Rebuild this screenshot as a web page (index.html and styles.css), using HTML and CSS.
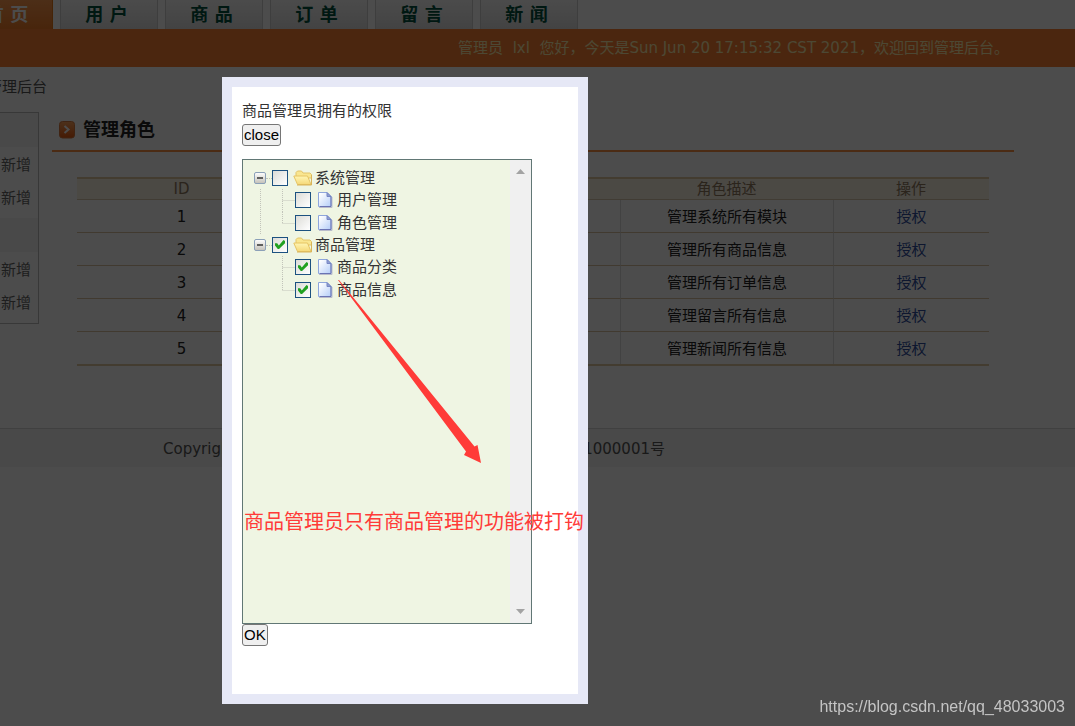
FILE: index.html
```html
<!DOCTYPE html>
<html lang="zh-CN">
<head>
<meta charset="utf-8">
<title>管理后台</title>
<link rel="stylesheet" href="styles.css">
</head>
<body>
<svg class="defs" aria-hidden="true">
  <defs>
    <linearGradient id="gFolder" x1="0" y1="0" x2="0" y2="1"><stop offset="0" stop-color="#fff6b4"/><stop offset="1" stop-color="#f5d878"/></linearGradient>
    <linearGradient id="gFile" x1="0" y1="0" x2="1" y2="1"><stop offset="0.1" stop-color="#ffffff"/><stop offset="1" stop-color="#b4cdf8"/></linearGradient>
    <linearGradient id="gToggle" x1="0" y1="0" x2="0" y2="1"><stop offset="0" stop-color="#ffffff"/><stop offset="1" stop-color="#c3c0b8"/></linearGradient>
    <linearGradient id="gTitle" x1="0" y1="0" x2="0" y2="1"><stop offset="0" stop-color="#ffa45c"/><stop offset="1" stop-color="#e85a10"/></linearGradient>
    <symbol id="folder" viewBox="0 0 20 16">
      <path d="M3 8V2.500L4.500 1H8.500L10 3H17L18.500 4.500V8z" fill="#f9e690" stroke="#e3c468"/>
      <path d="M.8 6H14.500L18 14.500H4.500z" fill="url(#gFolder)" stroke="#e6c463"/>
      <path d="M4 15H18.500V5" fill="none" stroke="#d9b55a"/>
    </symbol>
    <symbol id="file" viewBox="0 0 16 18">
      <path d="M2 16.500H15V6" fill="none" stroke="#b9bccb"/>
      <path d="M1.500 1.500H10L14 5.500V15.500H1.500z" fill="url(#gFile)" stroke="#8ea6dc"/>
      <path d="M10 1.500V5.500H14z" fill="#8f9fd2" stroke="#7686c4"/>
      <path d="M14 5.500V15.500H3" fill="none" stroke="#6a74b4"/>
    </symbol>
    <symbol id="minus" viewBox="0 0 12 12">
      <rect x=".5" y=".5" width="11" height="11" rx="1.500" fill="url(#gToggle)" stroke="#8ba0b8"/>
      <path d="M3 6H9" stroke="#333" stroke-width="1.500"/>
    </symbol>
    <symbol id="branch" viewBox="0 0 13 23">
      <path d="M.5 0V23M.5 11.500H13" fill="none" stroke="#c2c4ba" stroke-dasharray="1 1"/>
    </symbol>
    <symbol id="branchEnd" viewBox="0 0 13 23">
      <path d="M.5 0V11.500M.5 11.500H13" fill="none" stroke="#c2c4ba" stroke-dasharray="1 1"/>
    </symbol>
  </defs>
</svg>

<div class="page">
  <nav class="tabs">
    <a class="tab active" href="#">首 页</a>
    <a class="tab" href="#">用 户</a>
    <a class="tab" href="#">商 品</a>
    <a class="tab" href="#">订 单</a>
    <a class="tab" href="#">留 言</a>
    <a class="tab" href="#">新 闻</a>
  </nav>
  <div class="welcome">管理员&nbsp; lxl&nbsp; 您好，今天是Sun Jun 20 17:15:32 CST 2021，欢迎回到管理后台。</div>
  <div class="crumb">管理后台</div>
  <div class="columns">
    <aside class="side">
      <div class="side-head"></div>
      <a href="#">新增</a>
      <a href="#">新增</a>
      <div class="side-head"></div>
      <a href="#">新增</a>
      <a href="#">新增</a>
    </aside>
    <main class="main">
      <h1 class="title">
        <svg width="16" height="18" viewBox="0 0 16 18"><rect x=".5" y=".5" width="15" height="16.500" rx="3" fill="url(#gTitle)" stroke="#d87a40"/><path d="M5.500 5L9.500 8.500L5.500 12" fill="none" stroke="#fff" stroke-width="2"/></svg>
        管理角色
      </h1>
      <table class="roles">
        <thead>
          <tr><th class="c-id">ID</th><th class="c-name">角色名称</th><th class="c-desc">角色描述</th><th class="c-op">操作</th></tr>
        </thead>
        <tbody>
          <tr><td>1</td><td>系统管理员</td><td>管理系统所有模块</td><td><a href="#">授权</a></td></tr>
          <tr><td>2</td><td>商品管理员</td><td>管理所有商品信息</td><td><a href="#">授权</a></td></tr>
          <tr><td>3</td><td>订单管理员</td><td>管理所有订单信息</td><td><a href="#">授权</a></td></tr>
          <tr><td>4</td><td>留言管理员</td><td>管理留言所有信息</td><td><a href="#">授权</a></td></tr>
          <tr><td>5</td><td>新闻管理员</td><td>管理新闻所有信息</td><td><a href="#">授权</a></td></tr>
        </tbody>
      </table>
    </main>
  </div>
  <footer class="footer"><span>Copyright © 2021 All Rights Reserved.</span><span>京ICP证1000001号</span></footer>
</div>

<div class="overlay">
  <section class="dialog" role="dialog" aria-labelledby="dlg-title">
    <div class="dlg-title" id="dlg-title">商品管理员拥有的权限</div>
    <button class="btn" type="button">close</button>
    <div class="treebox">
      <ul class="tree">
        <li>
          <div class="row">
            <button class="toggle" type="button" aria-label="折叠"><svg width="12" height="12"><use href="#minus"/></svg></button>
            <span class="dots"></span>
            <label><input type="checkbox"><svg class="folder" width="20" height="16"><use href="#folder"/></svg>系统管理</label>
          </div>
          <ul class="children">
            <li class="row"><svg width="13" height="23"><use href="#branch"/></svg><label><input type="checkbox"><svg class="file" width="16" height="18"><use href="#file"/></svg>用户管理</label></li>
            <li class="row"><svg width="13" height="23"><use href="#branchEnd"/></svg><label><input type="checkbox"><svg class="file" width="16" height="18"><use href="#file"/></svg>角色管理</label></li>
          </ul>
        </li>
        <li>
          <div class="row">
            <button class="toggle" type="button" aria-label="折叠"><svg width="12" height="12"><use href="#minus"/></svg></button>
            <span class="dots"></span>
            <label><input type="checkbox" checked><svg class="folder" width="20" height="16"><use href="#folder"/></svg>商品管理</label>
          </div>
          <ul class="children last">
            <li class="row"><svg width="13" height="23"><use href="#branch"/></svg><label><input type="checkbox" checked><svg class="file" width="16" height="18"><use href="#file"/></svg>商品分类</label></li>
            <li class="row"><svg width="13" height="23"><use href="#branchEnd"/></svg><label><input type="checkbox" checked><svg class="file" width="16" height="18"><use href="#file"/></svg>商品信息</label></li>
          </ul>
        </li>
      </ul>
      <div class="scroll" aria-hidden="true">
        <svg width="9" height="5" viewBox="0 0 9 5"><path d="M0 5L4.500 0L9 5z" fill="#a3a3a3"/></svg>
        <svg width="9" height="5" viewBox="0 0 9 5"><path d="M0 0L4.500 5L9 0z" fill="#a3a3a3"/></svg>
      </div>
    </div>
    <button class="btn" type="button">OK</button>
    <svg class="arrow" width="144" height="184" viewBox="0 0 144 184"><path d="M0 0L1 0L136.500 166.500L139.500 165L143 183L126 175L128 171.500L56 75Z" fill="#ff3b38"/></svg>
    <p class="note">商品管理员只有商品管理的功能被打钩</p>
  </section>
  <div class="mark">https://blog.csdn.net/qq_48033003</div>
</div>
</body>
</html>
```
FILE: styles.css
```css
* { box-sizing: border-box; }

body {
  margin: 0;
  overflow: hidden;
  background: #fff;
  color: #222;
  font: 15px/20px "DejaVu Sans", "Noto Sans CJK SC", sans-serif;
}

ul { margin: 0; padding: 0; list-style: none; }
a { text-decoration: none; }
.defs { position: absolute; width: 0; height: 0; }

.tabs {
  display: flex;
  gap: 7px;
  height: 29px;
  margin-left: -45px;
}

.tab {
  width: 98px;
  padding-right: 5px;
  border: solid #d0d0d0;
  border-width: 0 1px;
  background: linear-gradient(#fcfcfc, #e0e0e0);
  color: #00503c;
  font-size: 18px;
  font-weight: bold;
  line-height: 30px;
  text-align: center;
}

.tab.active {
  padding: 0 0 0 6px;
  border-color: #e87818;
  background: linear-gradient(#ff9a50, #f07c28);
  color: #fff;
}

.welcome {
  height: 38px;
  padding-right: 66px;
  background: #fa7f35;
  color: #fff0b0;
  line-height: 38px;
  text-align: right;
}

.crumb {
  padding: 10px 0 15px;
  margin-left: -13px;
  color: #555;
}

.columns {
  display: flex;
  align-items: flex-start;
  gap: 13px;
}

.side {
  width: 39px;
  border: 1px solid #bbb;
  border-left: 0;
  padding-bottom: 3px;
}

.side a {
  display: block;
  padding-left: 1px;
  color: #666;
  line-height: 33px;
}

.side-head { height: 34px; margin-bottom: 2px; background: #f6f6f6; }
.side a + .side-head { margin-top: 3px; }

.main { flex: 1; margin-right: 61px; }

.title {
  display: flex;
  align-items: center;
  gap: 8px;
  margin: 0;
  padding: 0 7px 2px;
  border-bottom: 2px solid #fa8f45;
  color: #222;
  font-size: 18px;
  line-height: 36px;
}

.roles {
  width: calc(100% - 50px);
  margin: 25px 25px 0;
  border: solid #e0c8a0;
  border-width: 2px 0;
  border-spacing: 0;
  table-layout: fixed;
  text-align: center;
}

.roles th {
  height: 21px;
  padding: 0;
  border-bottom: 1px solid #d9c9b0;
  background: #fbf3e4;
  color: #8f7a60;
  font-weight: normal;
}

.roles td {
  height: 33px;
  padding: 2px 0 0;
  border-bottom: 1px solid #d9c3a0;
}

.roles tr:last-child td { height: 32px; border-bottom: 0; }
.roles td:nth-child(n+3) { border-left: 1px solid #dedede; }
.roles a { color: #2f4f9f; }
.c-id { width: 209px; }
.c-desc { width: 213px; }
.c-op { width: 156px; }

.footer {
  display: flex;
  justify-content: space-between;
  height: 39px;
  margin-top: 62px;
  padding: 0 410px 0 163px;
  border-top: 1px solid #d8d8d8;
  background: #f4f4f4;
  color: #555;
  line-height: 40px;
  white-space: nowrap;
}

.overlay {
  position: fixed;
  inset: 0;
  padding: 77px 0 0 222px;
  background: rgba(0, 0, 0, 0.7);
}

.dialog {
  position: relative;
  width: 366px;
  padding: 14px 10px 48px;
  border: 10px solid #e6e8f6;
  background: #fff;
  color: #333;
}

.dlg-title { margin-bottom: 3px; }

.btn {
  display: block;
  height: 22px;
  padding: 0 1px;
  border: 1px solid #767676;
  border-radius: 3px;
  background: #efefef;
  color: #000;
  font: 15px/20px "Liberation Sans", sans-serif;
}

.treebox {
  display: flex;
  justify-content: space-between;
  width: 290px;
  height: 465px;
  margin-top: 13px;
  border: 1px solid #617775;
  background: #eff5e3;
}

.tree { padding: 7px 0 0 11px; }
.row { display: flex; align-items: center; height: 22px; }
.row label { display: flex; align-items: center; line-height: 22px; white-space: nowrap; }

.toggle {
  width: 12px;
  height: 12px;
  padding: 0;
  border: 0;
  background: none;
}

.toggle svg { display: block; }
.dots { width: 6px; border-top: 1px dotted #c2c4ba; }

.row input {
  appearance: none;
  width: 16px;
  height: 16px;
  margin: 0;
  border: 1px solid #1c5180;
  background: linear-gradient(135deg, #dcdcd7, #fff);
}

.row input:checked::before {
  content: "";
  display: block;
  width: 10px;
  height: 9px;
  margin: 2px;
  background: #21a121;
  clip-path: polygon(0 35%, 22% 35%, 38% 60%, 85% 0, 100% 10%, 100% 35%, 40% 100%, 28% 100%, 0 60%);
}

.folder { margin: 0 2px 0 5px; }
.file { margin: 0 4px 0 6px; }

.children {
  display: flex;
  flex-direction: column;
  gap: 1px;
  margin-left: 6px;
  padding-left: 21px;
  border-left: 1px dotted #c2c4ba;
}

.children.last { border-color: transparent; }

.scroll {
  display: flex;
  flex-direction: column;
  justify-content: space-between;
  align-items: center;
  width: 21px;
  padding: 9px 0;
  background: #f0f0f0;
}

.arrow { position: absolute; left: 106px; top: 193px; }

.note {
  position: absolute;
  left: 12px;
  top: 421px;
  margin: 0;
  color: #ff3b38;
  font-size: 20px;
  line-height: 28px;
  white-space: nowrap;
}

.mark {
  position: absolute;
  right: 10px;
  bottom: 9px;
  color: #c4c4c4;
  font: 16px/20px "Liberation Sans", sans-serif;
}
```
